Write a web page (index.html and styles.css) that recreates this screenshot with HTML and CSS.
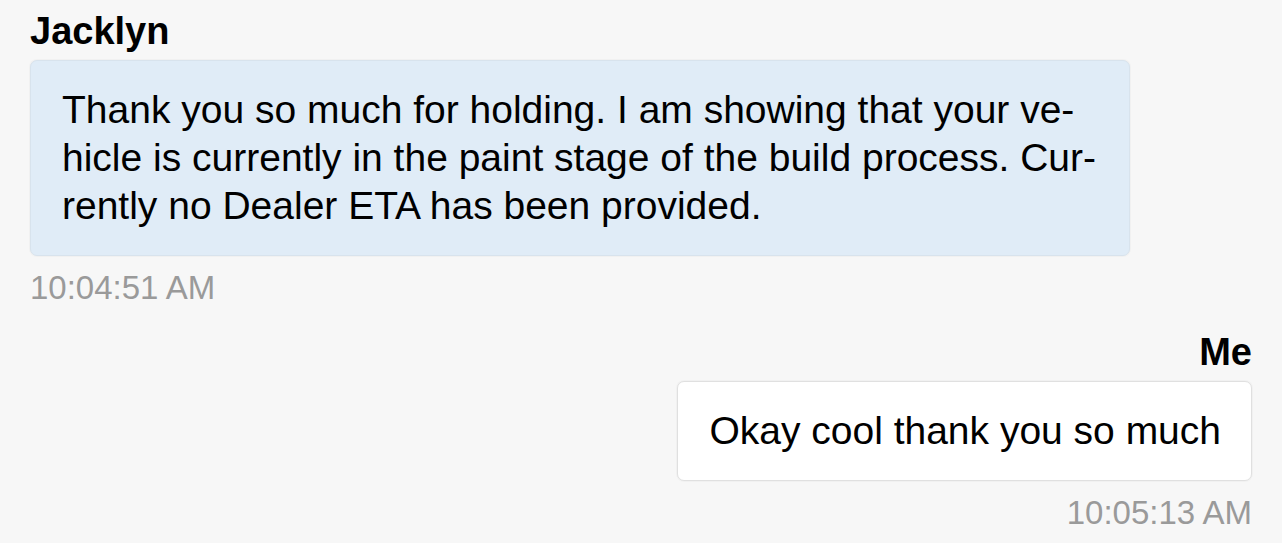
FILE: index.html
```html
<!DOCTYPE html>
<html lang="en">
<head>
<meta charset="utf-8">
<title>Chat</title>
<link rel="stylesheet" href="styles.css">
</head>
<body>
<main class="chat">
  <section class="msg msg-them">
    <div class="msg-name">Jacklyn</div>
    <div class="bubble bubble-them">Thank you so much for holding. I am showing that your ve&shy;hicle is currently in the paint stage of the build process. Cur&shy;rently no Dealer ETA has been provided.</div>
    <div class="msg-time">10:04:51 AM</div>
  </section>
  <section class="msg msg-me">
    <div class="msg-name">Me</div>
    <div class="bubble bubble-me">Okay cool thank you so much</div>
    <div class="msg-time">10:05:13 AM</div>
  </section>
</main>
</body>
</html>
```

FILE: styles.css
```css
html, body {
  margin: 0;
  padding: 0;
  background: #f7f7f7;
}

body {
  font-family: "Liberation Sans", Arial, Helvetica, sans-serif;
  color: #000;
}

.chat {
  display: flex;
  flex-direction: column;
  gap: 22px;
  padding: 9px 30px 0 30px;
}

.msg {
  display: flex;
  flex-direction: column;
}

.msg-them {
  align-items: flex-start;
}

.msg-me {
  align-items: flex-end;
}

.msg-name {
  font-size: 38px;
  font-weight: 700;
  line-height: 44px;
  margin-bottom: 7px;
}

.bubble {
  box-sizing: border-box;
  max-width: 90%;
  font-size: 39px;
  line-height: 48px;
  padding: 25px 30px 25px 31px;
  border-radius: 7px;
  border: 1px solid #e1e4e7;
  hyphens: manual;
  box-shadow: 0 0 0 1px rgba(0, 0, 0, 0.025);
}

.bubble-them {
  background: #e0ecf7;
  border-color: #d8e3ed;
}

.bubble-me {
  background: #ffffff;
  border-color: #e0e0e0;
}

.msg-time {
  margin-top: 12px;
  font-size: 33px;
  line-height: 40px;
  color: #9a9a9a;
}
```
